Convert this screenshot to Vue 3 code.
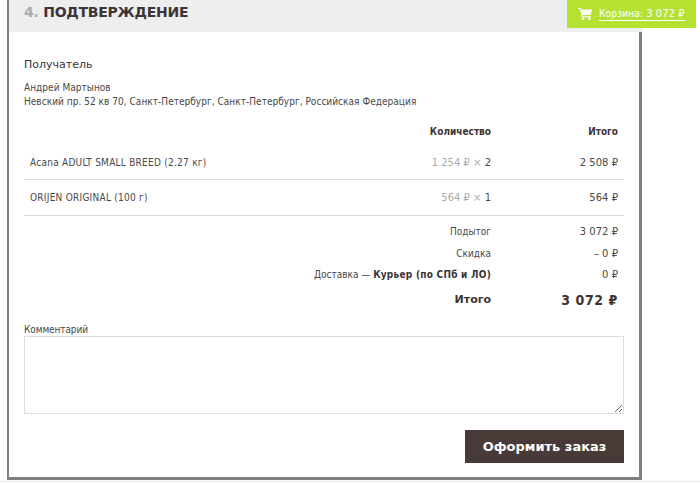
<script setup>
const items = [
  { name: 'Acana ADULT SMALL BREED (2.27 кг)', price: '1 254 ₽', qty: '2', total: '2 508 ₽' },
  { name: 'ORIJEN ORIGINAL (100 г)', price: '564 ₽', qty: '1', total: '564 ₽' },
]
</script>

<template>
  <div class="page">
    <div class="card">
      <header class="head">
        <h1 class="title"><span class="num">4.</span> ПОДТВЕРЖДЕНИЕ</h1>
      </header>
      <div class="body">
        <h2 class="recipient">Получатель</h2>
        <p class="address">Андрей Мартынов<br />Невский пр. 52 кв 70, Санкт-Петербург, Санкт-Петербург, Российская Федерация</p>

        <div class="row thead">
          <div class="c-name"></div>
          <div class="c-qty">Количество</div>
          <div class="c-total">Итого</div>
        </div>
        <div v-for="item in items" :key="item.name" class="row item">
          <div class="c-name">{{ item.name }}</div>
          <div class="c-qty num-text"><span class="muted">{{ item.price }} ×</span> {{ item.qty }}</div>
          <div class="c-total num-text">{{ item.total }}</div>
        </div>

        <div class="sums">
          <div class="sum"><div class="c-label">Подытог</div><div class="c-total num-text">3 072 ₽</div></div>
          <div class="sum"><div class="c-label">Скидка</div><div class="c-total num-text">– 0 ₽</div></div>
          <div class="sum"><div class="c-label">Доставка — <b>Курьер (по СПб и ЛО)</b></div><div class="c-total num-text">0 ₽</div></div>
          <div class="sum grand"><div class="c-label">Итого</div><div class="c-total">3 072 ₽</div></div>
        </div>

        <label class="comment">
          <span class="comment-label">Комментарий</span>
          <textarea class="area"></textarea>
        </label>

        <div class="actions">
          <button class="submit" type="button">Оформить заказ</button>
        </div>
      </div>
    </div>
    <div class="page-rule"></div>

    <a class="cart" href="#" @click.prevent>
      <svg class="cart-icon" width="14" height="12" viewBox="0 0 14 12" aria-hidden="true">
        <path fill="#fff" d="M0 0h2.6l.6 1.5H14l-1.2 5.6H4.7l.3 1.1h7.8v1H4L1.9 1H0z" />
        <circle fill="#fff" cx="5" cy="10.7" r="1.3" />
        <circle fill="#fff" cx="11.4" cy="10.7" r="1.3" />
      </svg>
      <span class="cart-text">Корзина: <span class="num-text price">3 072 ₽</span></span>
    </a>
  </div>
</template>

<style>
html, body { margin: 0; background: #fff; }
</style>

<style scoped>
.page {
  position: relative;
  width: 700px;
  height: 483px;
  overflow: hidden;
  padding-left: 7px;
  box-sizing: border-box;
  font-family: "DejaVu Sans Condensed", "DejaVu Sans", Verdana, sans-serif;
  font-stretch: condensed;
  font-size: 10px;
  color: #484848;
}
.num-text {
  font-family: "DejaVu Sans", Verdana, sans-serif;
  font-stretch: normal;
}
.card {
  width: 635px;
  height: 480px;
  box-sizing: border-box;
  border: solid #808080;
  border-width: 0 3px 3px 2px;
  background: #fff;
}
.page-rule {
  margin: 1px 0 0 -7px;
  height: 1px;
  background: #ececec;
}
.head {
  height: 32px;
  background: #eee;
  margin-right: -3px;
}
.title {
  margin: 0;
  padding: 3px 0 0 15px;
  font-family: "DejaVu Sans", Verdana, sans-serif;
  font-stretch: normal;
  font-size: 14px;
  line-height: 18px;
  font-weight: 700;
  letter-spacing: -0.25px;
  color: #3d3535;
}
.num { color: #aaa; }
.body { padding: 0 15px; }
.recipient {
  margin: 0;
  padding-top: 25px;
  font-family: "DejaVu Sans", Verdana, sans-serif;
  font-stretch: normal;
  font-size: 11px;
  line-height: 15px;
  font-weight: 400;
  color: #333;
}
.address {
  margin: 9px 0 0;
  line-height: 14px;
  letter-spacing: 0.03px;
}
.row {
  display: grid;
  grid-template-columns: 1fr 199px 133px;
  align-items: center;
}
.thead {
  height: 17px;
  margin-top: 14px;
  font-weight: 700;
  color: #3d3535;
}
.item {
  height: 36px;
  padding-left: 6px;
  border-bottom: 1px solid #ddd;
  box-sizing: border-box;
}
.item .c-name { letter-spacing: 0.25px; }
.thead + .item { height: 40px; padding-top: 5px; }
.c-qty, .c-total, .c-label { text-align: right; }
.c-total { padding-right: 6px; }
.muted { color: #aaa; }
.sums { padding-top: 5px; }
.sum {
  display: grid;
  grid-template-columns: 1fr 133px;
  align-items: center;
  height: 21.5px;
}
.c-label b { color: #3d3535; letter-spacing: 0.25px; }
.grand {
  height: 28px;
  font-weight: 700;
  color: #3d3535;
}
.grand .c-label {
  font-family: "DejaVu Sans", Verdana, sans-serif;
  font-stretch: normal;
  font-size: 11px;
}
.grand .c-total { font-size: 14px; letter-spacing: 0.6px; }
.comment { display: block; margin-top: 10px; }
.comment-label { display: block; line-height: 12px; letter-spacing: -0.1px; }
.area {
  display: block;
  width: 100%;
  height: 78px;
  margin: 0;
  box-sizing: border-box;
  border: 1px solid #ddd;
  background: #fff;
  outline: none;
}
.actions {
  display: flex;
  justify-content: flex-end;
  margin-top: 16px;
}
.submit {
  width: 159px;
  height: 33px;
  padding: 0;
  border: 0;
  background: #483a37;
  color: #fff;
  font-family: "DejaVu Sans", Verdana, sans-serif;
  font-stretch: normal;
  font-size: 13px;
  font-weight: 700;
}
.cart {
  position: absolute;
  top: 0;
  left: 567px;
  width: 129px;
  height: 28px;
  display: flex;
  align-items: center;
  padding-left: 11px;
  gap: 7px;
  box-sizing: border-box;
  background: #b5e133;
  color: #fff;
  text-decoration: none;
}
.cart-icon { flex: none; }
.cart-text {
  border-bottom: 1px solid #fff;
  line-height: 12px;
  letter-spacing: 0.2px;
}
.price { letter-spacing: 0; }
</style>
